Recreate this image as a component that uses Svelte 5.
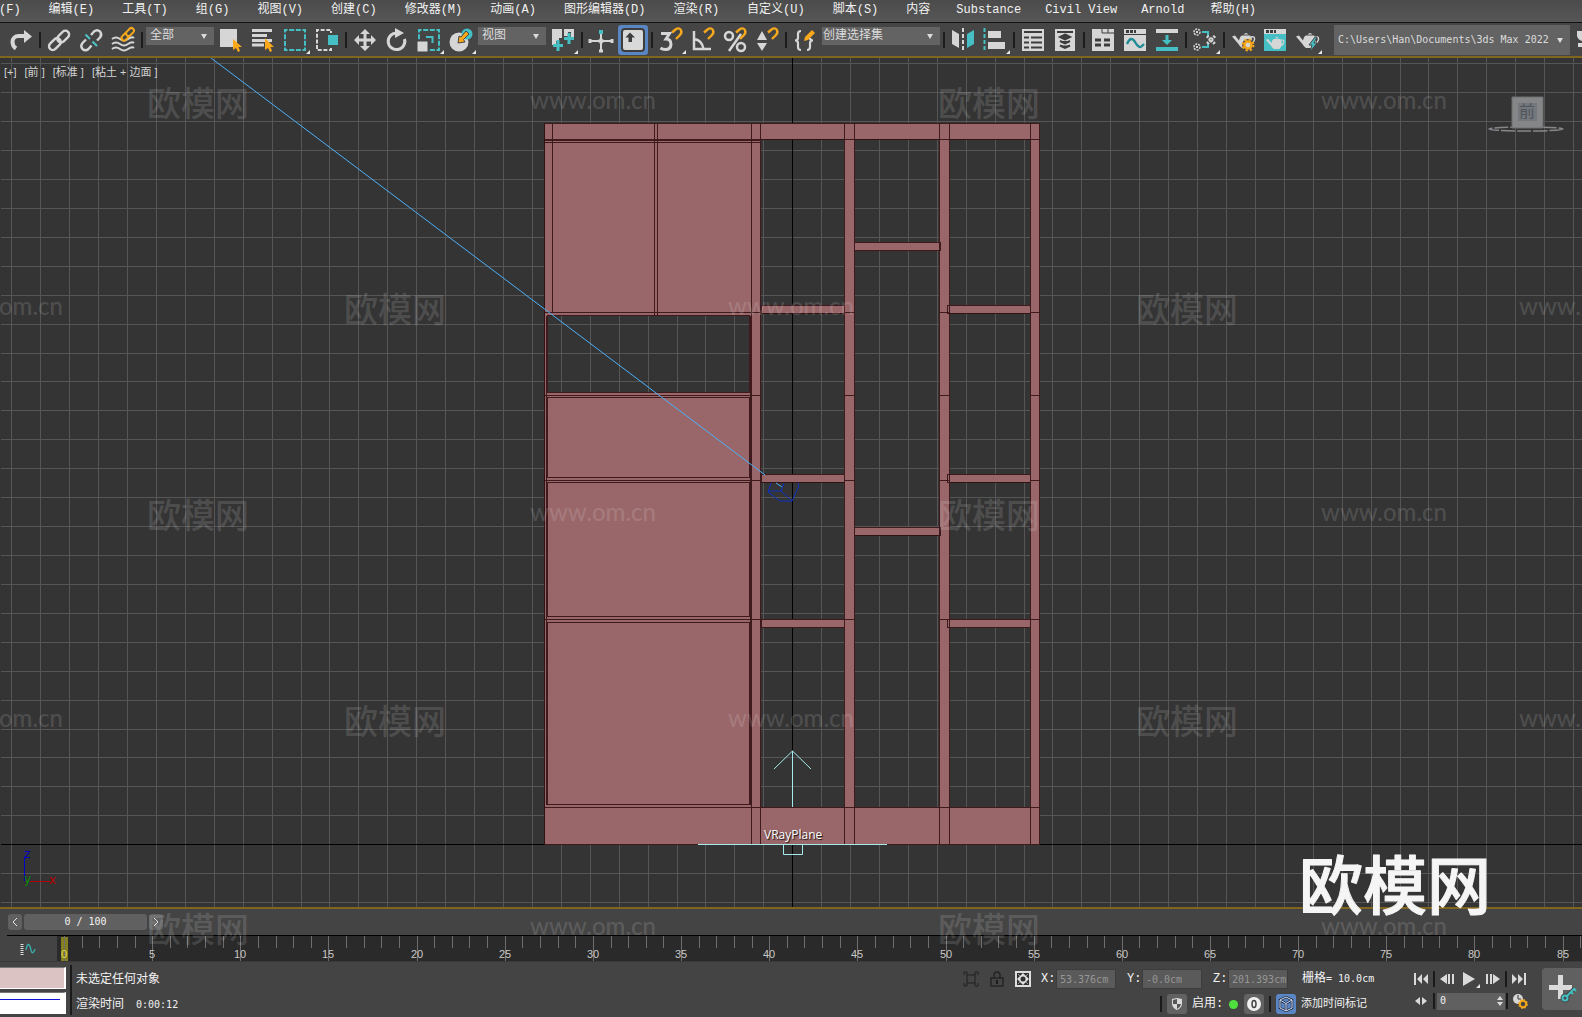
<script>
  const menus = ['文件(F)', '编辑(E)', '工具(T)', '组(G)', '视图(V)', '创建(C)', '修改器(M)', '动画(A)', '图形编辑器(D)', '渲染(R)', '自定义(U)', '脚本(S)', '内容', 'Substance', 'Civil View', 'Arnold', '帮助(H)'];
  const latin = ['Substance', 'Civil View', 'Arnold'];

  // Toolbar in reading order: '|' is a separator, objects are drop-downs.
  const tools = [
    'redo', '|', 'link', 'unlink', 'bind', '|',
    { label: '选择过滤器', value: '全部', size: 'short' },
    'select', 'byname', 'region', 'crossing', '|',
    'move', 'rotate', 'scale', 'place',
    { label: '参考坐标系', value: '视图', size: 'short' },
    'pivot', '|', 'manipulate', 'override', '|',
    'snap', 'angle', 'percent', 'spinner', '|', 'sets',
    { label: '命名选择集', value: '创建选择集', size: 'long' },
    '|', 'mirror', 'align', '|', 'layers', 'stack', '|',
    'ribbon', 'curve', 'schematic', '|', 'material', '|',
    'rendersetup', 'frame', 'render'
  ];
  const names = {
    redo: '重做', link: '链接', unlink: '取消链接', bind: '绑定到空间扭曲', select: '选择对象', byname: '按名称选择',
    region: '矩形选择区域', crossing: '窗口/交叉', move: '移动', rotate: '旋转', scale: '缩放', place: '放置', pivot: '使用轴点中心',
    manipulate: '操纵', override: '键盘快捷键覆盖', snap: '捕捉开关', angle: '角度捕捉', percent: '百分比捕捉', spinner: '微调器捕捉',
    sets: '编辑命名选择集', mirror: '镜像', align: '对齐', layers: '场景资源管理器', stack: '层资源管理器', ribbon: '功能区',
    curve: '曲线编辑器', schematic: '图解视图', material: '材质编辑器', rendersetup: '渲染设置', frame: '渲染帧窗口', render: '渲染产品'
  };
  const flyouts = ['region', 'scale', 'place', 'pivot', 'snap', 'align', 'material', 'render'];

  const step = 28.92;
  const gridX = Array.from({ length: 55 }, (_, i) => Math.round(792.18 + (i - 27) * step));
  const gridY = Array.from({ length: 30 }, (_, i) => Math.round(844.2 + (i - 27) * step));

  const rect = (x1, y1, x2, y2) => `M${x1} ${y1}H${x2}V${y2}H${x1}Z`;
  const sideGaps = [[139, 305], [313, 474], [482, 619], [628, 807]];
  const openings = [
    [548, 316, 749, 392],
    ...sideGaps.map(([a, b]) => [761, a, 844, b]),
    ...[[139, 242], [251, 527], [535, 807]].map(([a, b]) => [855, a, 939, b]),
    ...sideGaps.map(([a, b]) => [950, a, 1030, b])
  ];
  const cabinet = rect(545, 123, 1040, 845) + openings.map((o) => rect(...o)).join('');

  const shelves = [
    [761, 305, 844, 313], [761, 474, 844, 482], [761, 619, 844, 627],
    [947, 305, 1030, 313], [947, 474, 1030, 482], [947, 619, 1030, 627],
    [854, 242, 940, 250], [854, 527, 940, 535]
  ];
  const panels = [[547, 315, 749, 392], [547, 397, 749, 477], [547, 482, 749, 616], [547, 622, 749, 804]];
  const edges = [
    rect(544, 123, 1039, 844),
    'M544 139H1039M544 140H760M544 142H760M544 807H1039',
    'M552 123V312M654 123V315M657 123V315M751 123V844M760 123V844',
    'M844 123V844M854 123V844M939 123V844M949 123V844M1030 123V844',
    'M544 312H760M544 395H760M544 480H760M544 619H760',
    'M546 315V804M750 315V804',
    ...[312, 395, 480, 619].map((y) => `M844 ${y}H854M939 ${y}H949M1030 ${y}H1039`),
    ...[...shelves, ...panels].map((s) => rect(...s))
  ].join('');

  const frames = Array.from({ length: 87 }, (_, i) => ({ n: i, x: Math.round(7 + i * 17.63) }));

  // Watermark rows alternate between two column arrangements.
  const marks = [102, 308, 514, 720, 928].flatMap((y, r) => {
    const odd = r % 2 === 1;
    return [
      ...(odd ? [395, 1187] : [198, 989]).map((x) => ({ x, y: y + 14, text: '欧模网', kind: 'cn' })),
      ...(odd ? [0, 791, 1582] : [593, 1384]).map((x) => ({ x, y: y + 7, text: 'www.om.cn', kind: 'url' }))
    ];
  });

  let frame = '0';
</script>

{#snippet magnet()}
  <path d="M13 4.500L16.500 1.500Q20 -1 22 2.200Q23.300 5 20.500 7.500L17 11" fill="none" stroke="#f5a81c" stroke-width="2.400" />
{/snippet}

{#snippet teapot()}
  <path d="M1 8.500L4 7.500L8 12.500Q9 8 11 7.500H19Q21 9 21 13Q20.500 18 18 20H11Q8.500 18.500 7.500 16Z" fill="#d6d6d6" />
  <path d="M12.500 6.500Q15 3.500 17.500 6.500Z" fill="#d6d6d6" />
  <path d="M20 9Q24 8 23.500 11.500Q23 14.500 20 16" fill="none" stroke="#d6d6d6" stroke-width="1.500" />
{/snippet}

{#snippet icon(name)}
  <svg class="icon" viewBox="0 0 24 24" width="24" height="24" aria-hidden="true">
    {#if name === 'redo'}
      <path d="M16 8H9.500A6 6 0 0 0 3.500 14Q3.500 18 7 20.500" fill="none" stroke="#d6d6d6" stroke-width="4" />
      <path d="M15 2L23 8.500L15 15Z" fill="#d6d6d6" />
    {:else if name === 'link'}
      <g fill="none" stroke="#d6d6d6" stroke-width="2.400">
        <rect x="9.500" y="5" width="13.500" height="7.500" rx="3.700" transform="rotate(-45 16 8.700)" />
        <rect x="1" y="12.500" width="13.500" height="7.500" rx="3.700" transform="rotate(-45 7.700 16)" />
      </g>
    {:else if name === 'unlink'}
      <g fill="none" stroke="#d6d6d6" stroke-width="2.400">
        <path d="M12 7L15 3.500Q18 1 21 3.500Q23.500 6.500 21 9.500L18 12.500" />
        <path d="M7 11.500L3.500 15Q1 18 3.500 21Q6.500 23.500 9.500 21L12.500 17.500" />
      </g>
      <path d="M6.500 6.500L11 11M13.500 13.500L18 18" stroke="#4cc4c8" stroke-width="2" />
    {:else if name === 'bind'}
      <path d="M1 11Q5 8 9 11T17 11T23 10M1 16Q5 13 9 16T17 16T23 15M1 21Q5 18 9 21T17 21T23 20" fill="none" stroke="#d6d6d6" stroke-width="2" />
      <g fill="#454545" stroke="#f5a81c" stroke-width="2">
        <rect x="10" y="6" width="9" height="5" rx="2.500" transform="rotate(-45 14.500 8.500)" />
        <rect x="14.500" y="1.500" width="9" height="5" rx="2.500" transform="rotate(-45 19 4)" />
      </g>
    {:else if name === 'select'}
      <rect x="1" y="1" width="17" height="18" fill="#d6d6d6" />
      <path d="M14 11V22L17 20L19 24L21 23L19.500 19H23Z" fill="#fba91b" />
    {:else if name === 'byname'}
      <path d="M1 2.500H21M1 7.500H16M1 12.500H21M1 17H13" stroke="#d6d6d6" stroke-width="3" />
      <path d="M14 10V22L17 20L19 24L21 23L19.500 19H23Z" fill="#fba91b" />
    {:else if name === 'region'}
      <rect x="2" y="2" width="20" height="20" fill="none" stroke="#45bfc3" stroke-width="2" stroke-dasharray="5 1.660" stroke-dashoffset="2.500" />
    {:else if name === 'crossing'}
      <rect x="2" y="2" width="14" height="20" fill="none" stroke="#d6d6d6" stroke-width="2" stroke-dasharray="4 1.660" stroke-dashoffset="2" />
      <rect x="12" y="6" width="12" height="12" fill="#45bfc3" stroke="#454545" stroke-width="2" />
    {:else if name === 'move'}
      <path d="M12 1L17 6H13.500V10.500H18V7L23 12L18 17V13.500H13.500V18H17L12 23L7 18H10.500V13.500H6V17L1 12L6 7V10.500H10.500V6H7Z" fill="#d6d6d6" />
    {:else if name === 'rotate'}
      <path d="M12 5A8.300 8.300 0 1 0 19.500 11" fill="none" stroke="#d6d6d6" stroke-width="3" />
      <path d="M10 0L19 5L10 10Z" fill="#d6d6d6" />
    {:else if name === 'scale'}
      <rect x="2" y="2" width="20" height="20" fill="none" stroke="#45bfc3" stroke-width="2" stroke-dasharray="5 1.660" stroke-dashoffset="2.500" />
      <rect x="0" y="13" width="11" height="11" fill="#d6d6d6" stroke="#454545" stroke-width="1" />
      <path d="M9 9H15.500V15" fill="none" stroke="#45bfc3" stroke-width="2" />
    {:else if name === 'place'}
      <circle cx="10" cy="14" r="9.500" fill="#d6d6d6" />
      <circle cx="18" cy="6" r="5.500" fill="#45bfc3" />
      <path d="M17 3L20 6L14.500 11.500L16 14L9 15L10 8L12 9Z" fill="#fba91b" stroke="#454545" stroke-width="1" />
    {:else if name === 'pivot'}
      <path d="M1 1H11V10H8V13H5V17H1ZM13 1H23V11H20V4H17V8H13Z" fill="#d6d6d6" />
      <path d="M7 12V23M2 17.500H12M18 5V16M13 10.500H23" stroke="#45bfc3" stroke-width="3" />
    {:else if name === 'manipulate'}
      <path d="M12 5V23M1 13H23" stroke="#d6d6d6" stroke-width="2" />
      <path d="M1 11V15M23 11V15M10 23H14M9.500 13H14.500M12 10.500V15.500" stroke="#d6d6d6" stroke-width="3" />
      <rect x="10" y="2" width="4" height="4" fill="#45bfc3" />
    {:else if name === 'override'}
      <rect x="1" y="1" width="22" height="22" rx="3" fill="#d9d9d9" stroke="#3d3d3d" stroke-width="2" />
      <path d="M9 4.500L14 9.500H11V14H7.500V9.500H4.500Z" fill="#3d3d3d" />
    {:else if name === 'snap'}
      <path d="M2 5.500H10.500L7 11Q12 11 12 16.500Q11.500 21.500 6.500 21.500Q3.500 21.500 1.500 20" fill="none" stroke="#d6d6d6" stroke-width="3" />
      {@render magnet()}
    {:else if name === 'angle'}
      <path d="M3 3V21H20M3 11Q11 12 12.500 21" fill="none" stroke="#d6d6d6" stroke-width="2.500" />
      {@render magnet()}
    {:else if name === 'percent'}
      <g fill="none" stroke="#d6d6d6" stroke-width="2.500">
        <circle cx="6" cy="8" r="4" /><circle cx="18" cy="19" r="4" /><path d="M18 6L6 23" />
      </g>
      {@render magnet()}
    {:else if name === 'spinner'}
      <path d="M2 12L7 3L12 12ZM2 15H12L7 23Z" fill="#d6d6d6" />
      {@render magnet()}
    {:else if name === 'sets'}
      <path d="M8 3Q5 3 5 6V10Q5 12.500 2 12.500Q5 12.500 5 15V19Q5 22 8 22M14 22Q17 22 17 19V15Q17 12.500 20 12.500Q17 12.500 17 10" fill="none" stroke="#d6d6d6" stroke-width="2.200" />
      <path d="M11 13L12 9L19 2L22 5L15 12Z" fill="#fba91b" />
    {:else if name === 'mirror'}
      <path d="M1 2L8 6V20L1 16Z" fill="#d6d6d6" /><path d="M23 2L16 6V20L23 16Z" fill="#45bfc3" />
      <path d="M12 0V24" stroke="#d6d6d6" stroke-width="2" stroke-dasharray="4 2" />
    {:else if name === 'align'}
      <path d="M1.500 0V24" stroke="#45bfc3" stroke-width="2" stroke-dasharray="4 2" />
      <path d="M5 3H18V10H5ZM5 14H22V21H5Z" fill="#d6d6d6" />
    {:else if name === 'layers'}
      <rect x="1" y="1" width="22" height="22" fill="#d6d6d6" />
      <path d="M3 4H21M3 9.500H8M10 9.500H21M3 14.500H8M10 14.500H21M3 19.500H8M10 19.500H21" stroke="#3c3c3c" stroke-width="2" />
    {:else if name === 'stack'}
      <rect x="2" y="1" width="20" height="22" fill="#d6d6d6" />
      <path d="M4 4H20" stroke="#3c3c3c" stroke-width="2" />
      <path d="M12 6.500L17 9L12 11.500L7 9ZM7 13L12 15.500L17 13M7 17.500L12 20L17 17.500" fill="#3c3c3c" stroke="#3c3c3c" stroke-width="2" />
    {:else if name === 'ribbon'}
      <rect x="1" y="1" width="22" height="22" fill="#d6d6d6" />
      <path d="M11 1V5H23M17 1V5" fill="none" stroke="#3c3c3c" />
      <path d="M4 12H10M13 12H19M4 17H10M13 17H19" stroke="#3c3c3c" stroke-width="3" />
    {:else if name === 'curve'}
      <rect x="1" y="1" width="22" height="22" fill="#d6d6d6" />
      <path d="M1 6.500H23" stroke="#3c3c3c" /><path d="M3 3.500H13" stroke="#3c3c3c" stroke-width="3" stroke-dasharray="3 1" />
      <path d="M4 16Q8 7 12 14T19 18L21 16" fill="none" stroke="#1f8b94" stroke-width="2.400" />
    {:else if name === 'schematic'}
      <path d="M1 1H23V5H1Z" fill="#d6d6d6" /><path d="M1 19H23V23H1Z" fill="#45bfc3" />
      <path d="M10.500 7H13.500V12H17L12 17L7 12H10.500Z" fill="#45bfc3" />
    {:else if name === 'material'}
      <g fill="#454545" stroke="#d6d6d6" stroke-width="1.500" stroke-dasharray="2 1">
        <circle cx="4" cy="4" r="3" /><circle cx="4" cy="19" r="3" />
      </g>
      <path d="M3 3H5V5H3ZM3 18H5V20H3Z" fill="#d6d6d6" />
      <path d="M9 4H15V8M9 19H15V16" fill="none" stroke="#45bfc3" stroke-width="2" />
      <path d="M14 8L22 16M22 8L14 16" stroke="#d6d6d6" stroke-width="3" stroke-dasharray="2 1" />
    {:else if name === 'rendersetup'}
      {@render teapot()}
      <circle cx="17" cy="17" r="6" fill="#454545" />
      <circle cx="17" cy="17" r="3.500" fill="#d6d6d6" stroke="#f5a81c" stroke-width="2.500" />
      <circle cx="17" cy="17" r="5.500" fill="none" stroke="#f5a81c" stroke-width="2" stroke-dasharray="2.300 2.020" />
    {:else if name === 'frame'}
      <rect x="1" y="1" width="22" height="22" fill="#45bfc3" />
      <path d="M1 1H23V6H1Z" fill="#d6d6d6" /><path d="M3 3.500H13" stroke="#3c3c3c" stroke-width="3" stroke-dasharray="3 1" />
      <g transform="translate(2 5) scale(0.8)">{@render teapot()}</g>
    {:else if name === 'render'}
      {@render teapot()}
      <path d="M20 9L14 17H17L15 24L22 15H19L22 9Z" fill="#45bfc3" stroke="#454545" stroke-width="1" />
    {/if}
    {#if flyouts.includes(name)}<path d="M27 22V26H23Z" fill="#e8e8e8" />{/if}
  </svg>
{/snippet}

<div class="app">
  <nav class="menubar">
    {#each menus as m}
      <button class="menu" class:latin={latin.includes(m)}>{m}</button>
    {/each}
  </nav>

  <div class="toolbar">
    {#each tools as t}
      {#if t === '|'}
        <span class="sep"></span>
      {:else if typeof t === 'string'}
        <button class="tool" class:active={t === 'override'} aria-label={names[t]}>{@render icon(t)}</button>
      {:else}
        <span class="drop {t.size}">
          <select aria-label={t.label}><option>{t.value}</option></select>
          <svg class="arrow" viewBox="0 0 6 5" width="6" height="5" aria-hidden="true"><path d="M0 0H6L3 5Z" fill="#dcdcdc" /></svg>
        </span>
      {/if}
    {/each}
    <span class="grip"></span>
    <span class="drop path">
      <select aria-label="项目文件夹"><option>C:\Users\Han\Documents\3ds Max 2022</option></select>
      <svg class="arrow" viewBox="0 0 6 5" width="6" height="5" aria-hidden="true"><path d="M0 0H6L3 5Z" fill="#dcdcdc" /></svg>
    </span>
    <button class="cut" aria-label="更多">
      <svg viewBox="0 0 6 24" width="6" height="24" aria-hidden="true"><path d="M1 3H6V13Q2 12 1 8ZM2 15H6V19H2Z" fill="#d6d6d6" /></svg>
    </button>
  </div>

  <main class="viewport">
    <svg class="scene" viewBox="0 58 1582 849" preserveAspectRatio="xMidYMid slice" aria-label="前视图">
      <g transform="translate(0.5 0.5)" fill="none" shape-rendering="crispEdges">
        <g stroke="#565656">
          {#each gridX as x}<path d="M{x} 57V908" />{/each}
          {#each gridY as y}<path d="M0 {y}H1582" />{/each}
        </g>
        <path d="M792 57V908M0 844H1582" stroke="#000" />
      </g>
      <path d={cabinet} fill="#99676a" fill-rule="evenodd" />
      <path d={edges} transform="translate(0.5 0.5)" fill="none" stroke="#2f0d0f" stroke-opacity="0.85" shape-rendering="crispEdges" />
      <path d="M211 58L765 475M776 483L782 487" stroke="#4cb0f8" fill="none" />
      <path d="M771 483L768 492L780 501H792L799 486L798 483M768 491H781L784 483M781 491L792 501" stroke="#0c31c4" fill="none" />
      <path d="M792.500 751V807M774 769L792.500 751L811 769M698 844.500H887M783.500 845V854.500H802.500V845" stroke="#a5ebea" fill="none" />
      <text x="764" y="839" class="objname">VRayPlane</text>

      <ellipse cx="1526" cy="129" rx="37" ry="2" fill="none" stroke="#85888b" stroke-width="1.500" stroke-dasharray="14 2" />
      <path d="M1512 97H1543V128H1512Z" fill="#858687" stroke="#6d6e6f" />
      <path d="M1518 103H1537V121H1518Z" fill="#74777c" />
      <text x="1527" y="117" class="cube">前</text>

      <path d="M24.500 857V881" stroke="#0000c8" /><path d="M30 881.500H50" stroke="#b40000" />
      <text x="24" y="858" class="axis z">z</text>
      <text x="24" y="883" class="axis y">y</text>
      <text x="49" y="884" class="axis x">x</text>
    </svg>
    <div class="labels">
      <button>[+]</button><button>[前 ]</button><button>[标准 ]</button><button>[粘土 + 边面 ]</button>
    </div>
  </main>

  <section class="time">
    <span class="timegrip"></span>
    <div class="timebody">
      <div class="slider">
        <button class="nudge" aria-label="上一帧"><svg viewBox="0 0 6 10" width="6" height="10"><path d="M5 1L1 5L5 9" fill="none" stroke="#e6e6e6" /></svg></button>
        <button class="thumb num">0 / 100</button>
        <button class="nudge" aria-label="下一帧"><svg viewBox="0 0 6 10" width="6" height="10"><path d="M1 1L5 5L1 9" fill="none" stroke="#e6e6e6" /></svg></button>
      </div>
      <div class="track">
        <button class="mini" aria-label="打开迷你曲线编辑器">
          <svg viewBox="0 0 16 12" width="16" height="12"><path d="M2 1V12" stroke="#ddd" stroke-width="3" stroke-dasharray="1 1" /><path d="M6 7Q8 -3 10.500 5Q12 14 15 6" fill="none" stroke="#3ba7a5" stroke-width="1.500" /></svg>
        </button>
        <svg class="ruler" height="25">
          <rect x="4" y="1" width="7" height="24" fill="#85801f" />
          {#each frames as f}
            <rect x={f.x} y="0" width="1" height={f.n % 5 ? 12 : 25} fill="#6e6e6e" />
            {#if f.n % 5 === 0}<text x={f.x} y="22" class:first={f.n === 0}>{f.n}</text>{/if}
          {/each}
        </svg>
      </div>
    </div>
  </section>

  <footer class="status">
    <div class="listener">
      <div class="macro"></div>
      <div class="script"><span></span></div>
    </div>
    <div class="messages">
      <span>未选定任何对象</span>
      <span>渲染时间<span class="num clock">0:00:12</span></span>
    </div>
    <div class="coords">
      <div class="row first-row">
        <div class="locks">
          <button class="plain" aria-label="孤立当前选择"><svg viewBox="0 0 16 16" width="16" height="16"><path d="M4 4H12V12H4ZM1 4V1H4V4M12 4V1H15V4M1 12V15H4V12M12 12V15H15V12" fill="none" stroke="#202020" /></svg></button>
          <button class="plain" aria-label="选择锁定"><svg viewBox="0 0 14 16" width="14" height="16"><path d="M4 7V4Q4 1 7 1T10 4V7M1 7H13V15H1Z" fill="none" stroke="#242424" stroke-width="1.500" /><path d="M6 9H8V13H6Z" fill="#1d1d1d" /></svg></button>
          <button class="plain" aria-label="绝对模式变换输入"><svg viewBox="0 0 16 16" width="16" height="16"><path d="M1 1H15V15H1Z" fill="#303030" stroke="#dedede" stroke-width="2" /><path d="M8 2L14 8L8 14L2 8Z" fill="#dedede" /><circle cx="8" cy="8" r="2.500" fill="#303030" /><path d="M3 3L5 5M13 3L11 5M3 13L5 11M13 13L11 11" stroke="#999" /></svg></button>
        </div>
        <label class="coord">X:<input class="num" value="53.376cm" /></label>
        <label class="coord">Y:<input class="num" value="-0.0cm" /></label>
        <label class="coord">Z:<input class="num" value="201.393cm" /></label>
        <span class="gridsize">栅格<span class="num"> = 10.0cm</span></span>
      </div>
      <div class="row second-row">
        <span class="bar"></span>
        <button class="chip" aria-label="安全场景"><svg viewBox="0 0 12 14" width="12" height="14"><path d="M6 1L11 2V7Q10.500 11 6 13Q1.500 11 1 7V2Z" fill="#dadada" /><path d="M6 2V7H2V3ZM6 7H10Q9.500 10 6 12Z" fill="#555" /></svg></button>
        <span class="enable">启用:</span>
        <span class="dot"></span>
        <button class="chip" aria-label="状态"><svg viewBox="0 0 16 16" width="16" height="16"><circle cx="8" cy="8" r="7" fill="#f0f0f0" /><ellipse cx="8" cy="8" rx="2" ry="3.500" fill="none" stroke="#444" stroke-width="1.500" /></svg></button>
        <span class="bar"></span>
        <button class="chip blue" aria-label="时间标记"><svg viewBox="0 0 16 16" width="16" height="16"><path d="M8 1L14 4V12L8 15L2 12V4ZM2 4L8 7.500L14 4M8 7.500V15" fill="none" stroke="#1d2a44" stroke-width="2.500" /><path d="M8 1L14 4V12L8 15L2 12V4ZM2 4L8 7.500L14 4M8 7.500V15" fill="none" stroke="#d3dff5" /></svg></button>
        <button class="tag">添加时间标记</button>
      </div>
    </div>
    <div class="transport">
      <div class="row play">
        <button class="plain" aria-label="转至开头"><svg viewBox="0 0 16 12" width="16" height="12"><path d="M1 0H3V12H1ZM9 1V11L4 6ZM15 1V11L10 6Z" fill="#dadada" /></svg></button>
        <span class="bar"></span>
        <button class="plain" aria-label="上一帧"><svg viewBox="0 0 16 12" width="16" height="12"><path d="M8 1V11L1 6ZM9 1H11V11H9ZM13 1H15V11H13Z" fill="#dadada" /></svg></button>
        <button class="plain big-play" aria-label="播放动画"><svg viewBox="0 0 20 20" width="20" height="20"><path d="M2 3L14 10L2 17Z" fill="#dadada" /><path d="M19 15V19H15Z" fill="#e8e8e8" /></svg></button>
        <button class="plain" aria-label="下一帧"><svg viewBox="0 0 16 12" width="16" height="12"><path d="M8 1V11L15 6ZM5 1H7V11H5ZM1 1H3V11H1Z" fill="#dadada" /></svg></button>
        <span class="bar"></span>
        <button class="plain" aria-label="转至结尾"><svg viewBox="0 0 16 12" width="16" height="12"><path d="M13 0H15V12H13ZM7 1V11L12 6ZM1 1V11L6 6Z" fill="#dadada" /></svg></button>
      </div>
      <div class="row play">
        <button class="plain" aria-label="关键点模式"><svg viewBox="0 0 16 12" width="16" height="12"><path d="M7 2V10L2 6ZM9 2V10L14 6Z" fill="#dadada" /></svg></button>
        <span class="bar"></span>
        <label class="framebox"><input class="num" aria-label="当前帧" bind:value={frame} /><svg viewBox="0 0 6 10" width="6" height="10" aria-hidden="true"><path d="M0 4L3 0L6 4ZM0 6H6L3 10Z" fill="#dadada" /></svg></label>
        <span class="bar"></span>
        <button class="plain" aria-label="时间配置"><svg viewBox="0 0 16 16" width="16" height="16"><circle cx="6" cy="6" r="5" fill="#d6d6d6" /><path d="M6 2V6H9" fill="none" stroke="#333" /><circle cx="11" cy="11" r="3.200" fill="#444" stroke="#f5a81c" stroke-width="2" /><circle cx="11" cy="11" r="4.500" fill="none" stroke="#f5a81c" stroke-dasharray="1.800 1.700" /></svg></button>
      </div>
    </div>
    <button class="setkey" aria-label="设置关键点">
      <svg viewBox="0 0 30 32" width="30" height="32"><path d="M11 2H16V12H25V17H16V26H11V17H2V12H11Z" fill="#dadada" /><g fill="none" stroke="#444" stroke-width="4"><circle cx="18" cy="25" r="2.500" /><path d="M20 23L28 15" /></g><g fill="none" stroke="#45bfc3" stroke-width="2"><circle cx="18" cy="25" r="2.500" /><path d="M20 23L28 15M24 19L26 21M27 16L29 18" /></g></svg>
    </button>
  </footer>

  <svg class="marks" viewBox="0 0 1582 1017" preserveAspectRatio="xMidYMid slice" aria-hidden="true">
    {#each marks as m}<text x={m.x} y={m.y} class={m.kind}>{m.text}</text>{/each}
    <text x="1395" y="909" class="brand">欧模网</text>
  </svg>
</div>

<style>
  :global(body) { background: #444; }
  .app {
    position: relative;
    display: flex;
    flex-direction: column;
    min-height: 100vh;
    overflow: hidden;
    background: #444;
    color: #f2f2f2;
    font: 12px/16px "Liberation Mono", "Noto Sans CJK SC", monospace;
  }
  button, input, select { margin: 0; padding: 0; border: 0; background: none; color: inherit; font: inherit; border-radius: 0; }
  svg { display: block; flex: none; }
  .num { font-family: "DejaVu Sans Mono", monospace; font-size: 10px; white-space: pre; }

  .menubar { display: flex; height: 22px; margin-left: -39px; background: linear-gradient(#4b4b4b, #565656); border-bottom: 1px solid #121212; }
  .menu { padding: 0 14px 2px; white-space: nowrap; }
  .menu.latin { padding: 0 12px 2px; }

  .toolbar { display: flex; align-items: center; height: 33px; padding-left: 5px; background: #454545; border-bottom: 2px solid #80651f; }
  .tool { display: flex; align-items: center; justify-content: center; width: 32px; height: 30px; flex: none; }
  .tool.active { width: 30px; margin: 0 1px; background: #5b86c4; border-radius: 3px; }
  .icon { overflow: visible; }
  .sep { flex: none; width: 2px; height: 16px; margin: 0 2px; background: #1c1c1c; }
  .drop { position: relative; display: flex; flex: none; align-self: flex-start; height: 18px; margin: 4px 1px 0; background: #636363; color: #dcdcdc; }
  .drop select { width: 100%; padding-left: 4px; appearance: none; outline: none; }
  .arrow { position: absolute; right: 7px; top: 7px; }
  .short { width: 68px; }
  .long { width: 118px; }
  .long select { padding-left: 1px; }
  .grip { flex: none; width: 4px; height: 28px; margin: 0 3px 0 4px; background: radial-gradient(#8d8d8d 30%, transparent 40%) 0 0 / 2px 2px; }
  .path { flex: 1; align-self: center; height: 30px; margin: 0; }
  .path select { font-family: "DejaVu Sans Mono", monospace; font-size: 10px; }
  .path .arrow { top: 13px; }
  .cut { width: 12px; padding-left: 6px; box-sizing: border-box; }

  .viewport { position: relative; flex: 1; min-height: 0; background: #343434; border-bottom: 2px solid #80651f; }
  .scene { position: absolute; inset: 0; width: 100%; height: 100%; }
  .labels { position: absolute; top: 6px; left: 4px; display: flex; gap: 8px; color: #d2d2d2; font: 11px/16px "Liberation Sans", "Noto Sans CJK SC", sans-serif; }
  .objname { font: 12px "Open Sans", sans-serif; fill: #fff; text-shadow: 1px 1px 1px #111; }
  .cube { font: 16px "Noto Sans CJK SC", sans-serif; fill: #50555c; text-anchor: middle; }
  .axis { font: 12px "DejaVu Sans", sans-serif; }
  .z { fill: #0000c8; }
  .y { fill: #0c8a0c; }
  .x { fill: #b40000; }

  .time { display: flex; height: 52px; }
  .timegrip { width: 3px; margin: 7px 4px 2px 0; background: radial-gradient(#999 30%, transparent 40%) 0 0 / 2px 2px; }
  .timebody { flex: 1; min-width: 0; }
  .slider { display: flex; gap: 2px; height: 16px; padding: 5px 0 5px 1px; }
  .nudge, .thumb { background: #606060; border-radius: 3px; }
  .nudge { display: flex; align-items: center; justify-content: center; width: 14px; }
  .thumb { width: 123px; }
  .track { display: flex; height: 25px; border-top: 1px solid #000; background: #2a2a2a; }
  .mini { display: flex; align-items: center; justify-content: center; flex: none; width: 50px; padding-right: 8px; box-sizing: border-box; background: #444; }
  .ruler { flex: 1; width: 0; font: 11px "Liberation Sans", sans-serif; fill: #c8c8c8; text-anchor: middle; }
  .first { fill: #e4dc4e; }

  .status { display: flex; height: 56px; border-top: 1px solid #3a3a3a; box-sizing: border-box; }
  .listener { width: 66px; padding-top: 5px; margin-right: 4px; }
  .macro, .script { height: 20px; margin-bottom: 3px; border: solid #fff; border-width: 0 2px 1px 0; border-top: 1px solid #777; background: #dcc3c3; }
  .script { background: #fff; }
  .script span { display: block; width: 60px; height: 1px; margin-top: 6px; background: #1414d8; }
  .messages { display: flex; flex: 1; flex-direction: column; gap: 9px; margin: 3px 0 2px; padding: 7px 0 0 4px; border-left: 2px solid #1a1a1a; white-space: nowrap; }
  .clock { margin-left: 12px; }
  .coords { width: 449px; padding-top: 7px; }
  .row { display: flex; align-items: center; }
  .plain { display: flex; align-items: center; justify-content: center; width: 16px; height: 20px; }
  .first-row { gap: 12px; height: 20px; padding-left: 7px; white-space: nowrap; }
  .locks { display: flex; gap: 11px; width: 66px; }
  .coord { display: flex; align-items: center; width: 74px; justify-content: space-between; }
  .coord input { width: 58px; height: 18px; padding-left: 3px; box-sizing: border-box; background: #5a5a5a; color: #969696; outline: 1px solid #3d3d3d; }
  .gridsize { margin-left: 3px; }
  .second-row { gap: 5px; height: 20px; margin-top: 5px; padding-left: 204px; white-space: nowrap; }
  .bar { flex: none; width: 2px; height: 16px; background: #1a1a1a; }
  .chip { display: flex; flex: none; align-items: center; justify-content: center; width: 20px; height: 20px; border-radius: 3px; background: #626262; }
  .blue { background: #5b86c4; }
  .enable { width: 32px; }
  .dot { width: 9px; height: 9px; margin-right: 1px; border-radius: 50%; background: #4fe040; }
  .tag { font-size: 11px; }
  .transport { width: 122px; padding: 7px 7px 0 8px; }
  .play { gap: 4px; height: 20px; }
  .play + .play { margin-top: 2px; }
  .big-play { width: 18px; margin: 0 1px 0 3px; }
  .framebox { display: flex; flex: none; align-items: center; width: 68px; height: 17px; padding-right: 2px; margin-right: -3px; margin-left: -2px; box-sizing: border-box; background: #606060; }
  .framebox input { flex: 1; width: 0; padding-left: 3px; outline: none; }
  .setkey { display: flex; align-items: center; justify-content: center; width: 40px; height: 42px; margin-top: 6px; border-radius: 4px 0 0 4px; background: #606060; }

  .marks { position: absolute; inset: 0; width: 100%; height: 100%; pointer-events: none; }
  .marks text { text-anchor: middle; fill: #fff; fill-opacity: 0.15; }
  .marks .cn { font: 500 34px "Noto Sans CJK SC", sans-serif; }
  .marks .url { font: 500 24px "Lato", sans-serif; }
  .marks .brand { font: 500 64px "Noto Sans CJK SC", sans-serif; fill-opacity: 1; fill: #f5f5f5; stroke: #f5f5f5; stroke-width: 1px; stroke-linejoin: round; }
</style>
